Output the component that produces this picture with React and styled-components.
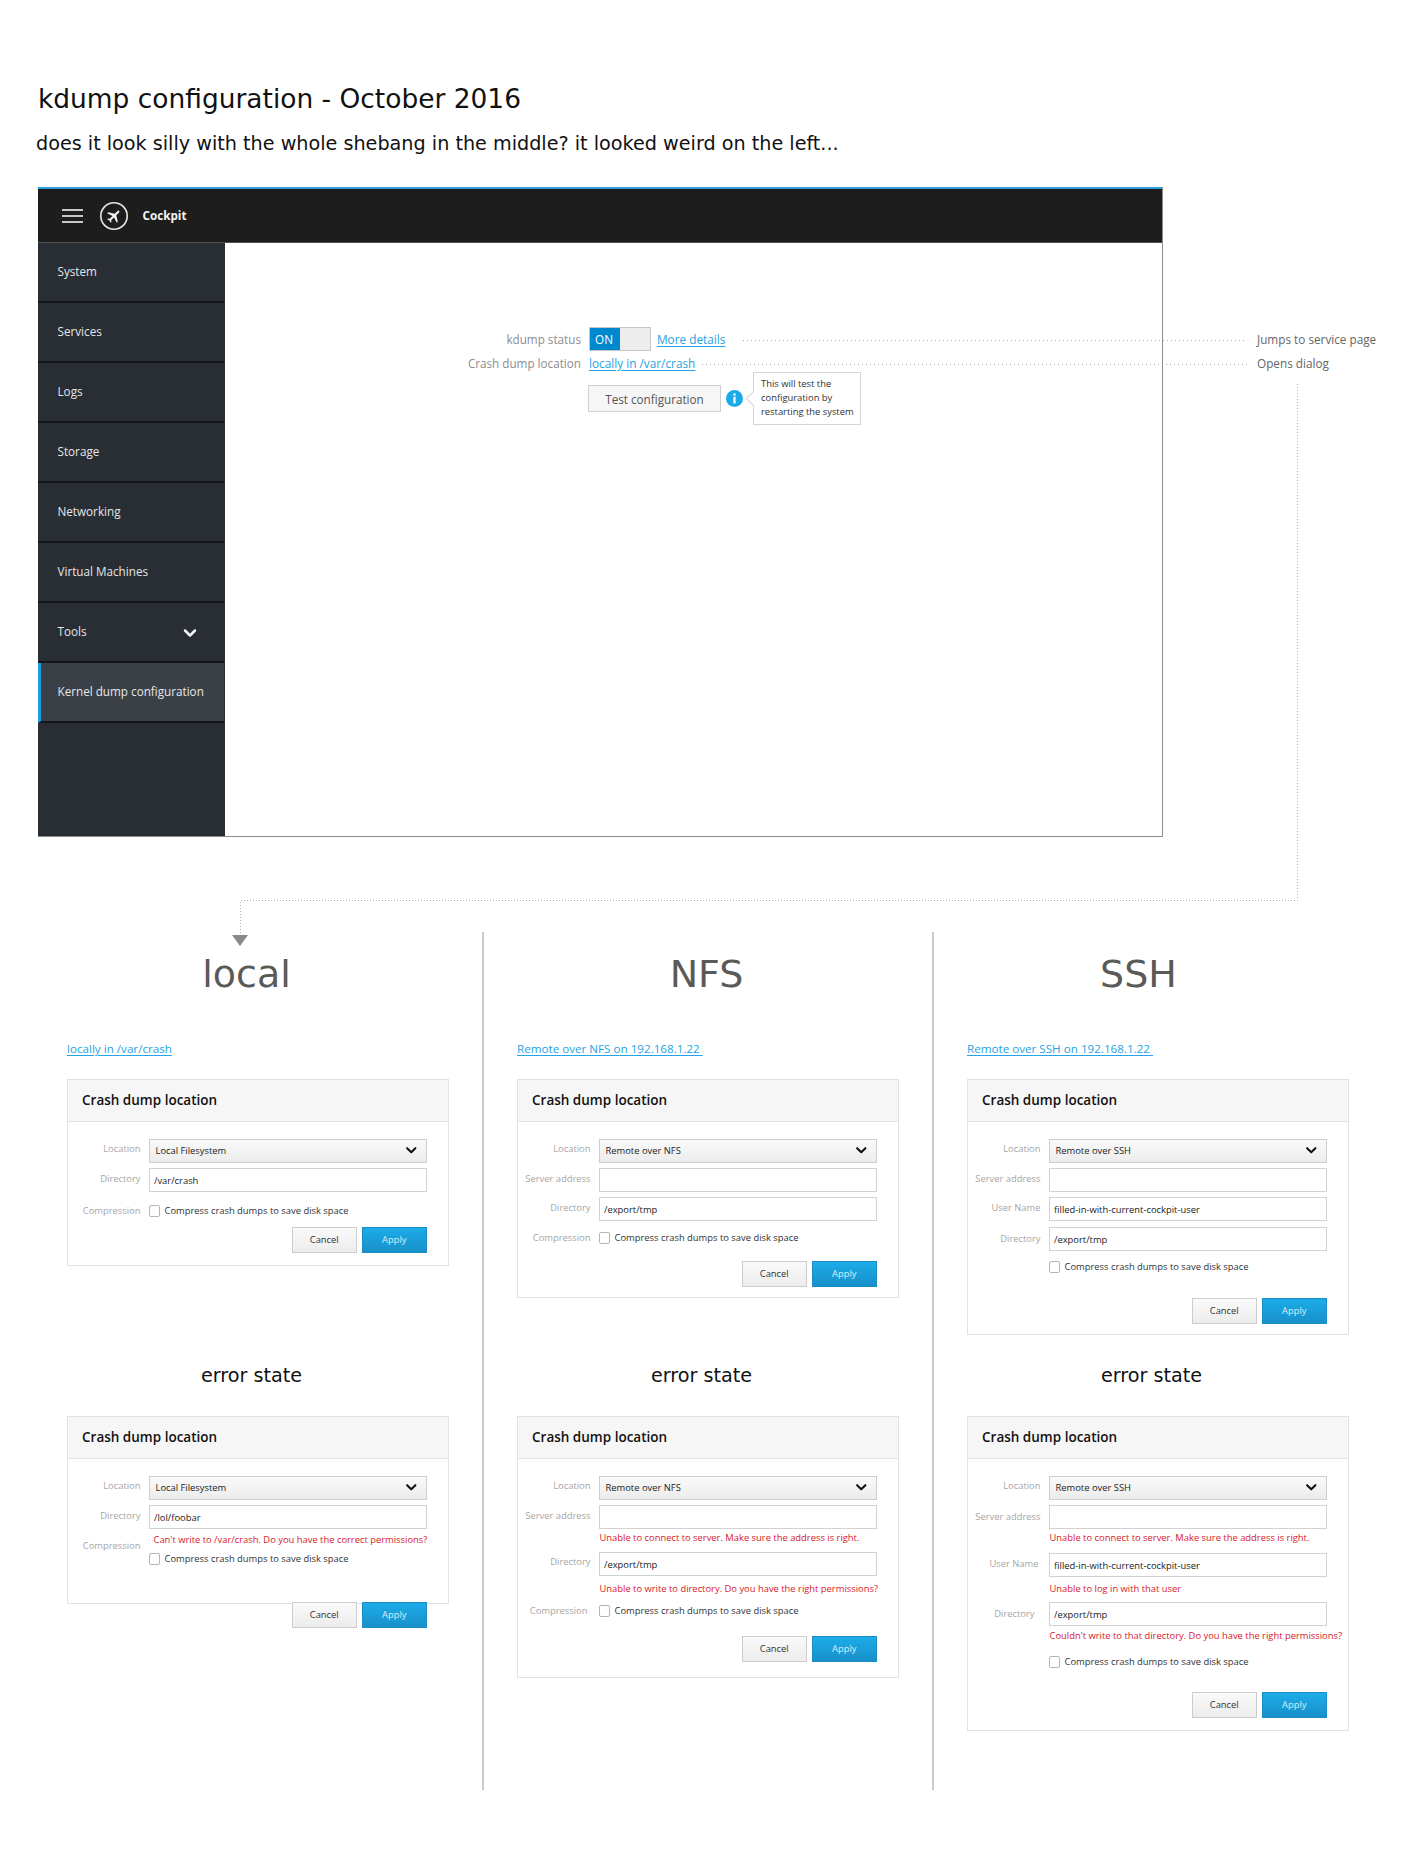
import styled, { createGlobalStyle } from "styled-components";
import { ChevronDown } from "lucide-react";

const GlobalStyle = createGlobalStyle`
  html, body {
    margin: 0;
    padding: 0;
    background: #fff;
  }
  * {
    box-sizing: border-box;
  }
`;

const Page = styled.div`
  position: relative;
  width: 1406px;
  height: 1875px;
  overflow: hidden;
  background: #fff;
  font-family: "Open Sans", sans-serif;
`;

const Title = styled.h1`
  margin: 0;
  padding: 82px 0 0 38px;
  font-family: "DejaVu Sans", sans-serif;
  font-size: 26.45px;
  line-height: 34px;
  font-weight: 400;
  color: #111;
`;

const Subtitle = styled.p`
  margin: 0;
  padding: 15.5px 0 0 36px;
  font-family: "DejaVu Sans", sans-serif;
  font-size: 19.2px;
  line-height: 24px;
  color: #111;
`;

const Window = styled.section`
  margin: 31.5px 0 0 37.5px;
  width: 1125px;
  height: 650px;
  display: flex;
  flex-direction: column;
  border-right: 1px solid #8c8c8c;
  border-bottom: 1px solid #8c8c8c;
`;

const TopBar = styled.header`
  height: 56px;
  flex: none;
  display: flex;
  align-items: center;
  padding-left: 24px;
  background: #1d1d1d;
  border-top: 2px solid #2a9fdc;
  border-bottom: 1px solid #4d4d4d;
  color: #fff;
`;

const Burger = styled.div`
  width: 21px;
  height: 14px;
  border-top: 2px solid #c8c8c8;
  border-bottom: 2px solid #c8c8c8;
  position: relative;
  &::after {
    content: "";
    position: absolute;
    left: 0;
    right: 0;
    top: 4px;
    height: 2px;
    background: #c8c8c8;
  }
`;

const Logo = styled.svg`
  margin-left: 16px;
  width: 30px;
  height: 30px;
`;

const Brand = styled.span`
  margin: -2px 0 0 14px;
  font-size: 11.7px;
  font-weight: 700;
  color: #f4f4f4;
`;

const Body = styled.div`
  flex: 1;
  display: flex;
  min-height: 0;
`;

const Sidebar = styled.nav`
  width: 187.5px;
  flex: none;
  background: #292e34;
`;

const NavItem = styled.div`
  height: 60px;
  width: 186.5px;
  display: flex;
  align-items: center;
  justify-content: space-between;
  padding: 0 24px 3px ${(p) => (p.$active ? "17px" : "20px")};
  font-size: 11.7px;
  white-space: nowrap;
  color: #e4e6e8;
  background: ${(p) => (p.$active ? "#3b4047" : "transparent")};
  border-left: ${(p) => (p.$active ? "3px solid #1a9fe0" : "none")};
  border-bottom: 2px solid #14171a;
`;

const NavChevron = styled(ChevronDown)`
  margin-top: 4px;
`;

const Main = styled.main`
  flex: 1;
  padding: 84px 0 0 199px;
  background: #fff;
`;

const StatusRow = styled.div`
  display: grid;
  grid-template-columns: 157px auto;
  column-gap: 8px;
  justify-content: start;
  align-items: center;
  height: ${(p) => p.$h}px;
  padding-top: ${(p) => p.$pt || 0}px;
`;

const StatusLabel = styled.span`
  text-align: right;
  font-size: 11.7px;
  color: #8b8d8f;
  white-space: nowrap;
`;

const StatusValue = styled.div`
  display: flex;
  align-items: center;
  gap: ${(p) => p.$gap || 7}px;
  margin-left: ${(p) => p.$left || 0}px;
`;

const Toggle = styled.div`
  width: 62px;
  height: 24px;
  display: flex;
  border: 1px solid #c6c6c6;
  background: #ededed;
`;

const ToggleOn = styled.span`
  width: 30px;
  display: flex;
  align-items: center;
  justify-content: center;
  padding-right: 2px;
  background: #0088ce;
  color: #fff;
  font-size: 11.7px;
`;

const Link = styled.a`
  font-size: ${(p) => p.$size || 11.8}px;
  color: #25a3e4;
  text-decoration: underline;
  text-underline-offset: 2px;
  white-space: nowrap;
`;

const TestButton = styled.button`
  width: 133px;
  height: 27px;
  padding: 0;
  border: 1.5px solid #cfcfcf;
  background: #f6f6f6;
  font-family: inherit;
  font-size: 11.7px;
  color: #555;
`;

const InfoIcon = styled.svg`
  width: 17px;
  height: 17px;
  margin-left: -2px;
`;

const Popover = styled.div`
  position: relative;
  width: 108px;
  height: 53px;
  margin-left: 3px;
  padding: 4px 0 0 7px;
  border: 1.5px solid #d4d4d4;
  background: #fff;
  font-size: 9.4px;
  line-height: 14px;
  color: #333;
  white-space: nowrap;
  &::before {
    content: "";
    position: absolute;
    left: -6px;
    top: 20px;
    width: 10px;
    height: 10px;
    background: #fff;
    border-left: 1.5px solid #d4d4d4;
    border-bottom: 1.5px solid #d4d4d4;
    transform: rotate(45deg);
  }
`;

const Connectors = styled.svg`
  position: absolute;
  left: 0;
  top: 0;
  width: 1406px;
  height: 1875px;
  pointer-events: none;
`;

const Note = styled.span`
  position: absolute;
  left: 1257px;
  top: ${(p) => p.$top}px;
  font-size: 11.75px;
  line-height: 18px;
  color: #666;
`;

const Columns = styled.div`
  display: flex;
  margin: 95px 0 0 33.5px;
  height: 858px;
`;

const Column = styled.section`
  width: 450px;
  flex: none;
  border-right: ${(p) => (p.$last ? "none" : "2px solid #c9c9c9")};
`;

const Upper = styled.div`
  height: 432px;
`;

const ColumnTitle = styled.h2`
  margin: 0;
  padding-top: 20px;
  width: ${(p) => p.$w}px;
  text-align: center;
  font-family: "DejaVu Sans", sans-serif;
  font-size: 38px;
  line-height: 44px;
  font-weight: 400;
  color: #5a5a58;
`;

const SummaryLink = styled.div`
  margin: 42px 0 0 33.5px;
  height: 18px;
  line-height: 18px;
`;

const Card = styled.div`
  width: 382px;
  margin: ${(p) => p.$top}px 0 0 33.5px;
  height: ${(p) => (p.$height ? `${p.$height}px` : "auto")};
  border: 1.5px solid #e2e2e2;
  padding-bottom: ${(p) => p.$pb ?? 0}px;
  background: #fff;
`;

const CardHead = styled.div`
  height: 41.5px;
  display: flex;
  align-items: center;
  padding-left: 14px;
  background: #f6f6f6;
  border-bottom: 1.5px solid #e2e2e2;
  font-size: 13.5px;
  font-weight: 600;
  color: #111;
`;

const CardRows = styled.div`
  padding-top: 17px;
`;

const Row = styled.div`
  display: grid;
  grid-template-columns: 72.5px 278px;
  column-gap: 8px;
  margin-bottom: ${(p) => p.$after ?? 5}px;
`;

const FieldLabel = styled.span`
  justify-self: end;
  margin-top: ${(p) => p.$shift || 0}px;
  margin-right: ${(p) => p.$inset || 0}px;
  font-size: 9.4px;
  line-height: ${(p) => p.$line}px;
  color: #a6a6a6;
  white-space: nowrap;
`;

const Select = styled.div`
  height: 24px;
  display: flex;
  align-items: center;
  justify-content: space-between;
  padding: 0 6px 0 6px;
  border: 1.5px solid #cdcdcd;
  background: linear-gradient(#fafafa, #ececec);
  font-size: 9.4px;
  color: #222;
`;

const Input = styled.div`
  height: 24px;
  display: flex;
  align-items: center;
  padding: 1px 0 0 4.5px;
  border: 1.5px solid #d2d2d2;
  background: #fff;
  font-size: 9.4px;
  color: #222;
`;

const ErrorText = styled.div`
  height: ${(p) => p.$h}px;
  padding-left: ${(p) => p.$indent || 1}px;
  font-size: 9.4px;
  line-height: ${(p) => p.$line}px;
  color: #d8202c;
  white-space: nowrap;
`;

const CheckLine = styled.label`
  display: flex;
  align-items: center;
  height: 12px;
  gap: 5px;
  font-size: 9.4px;
  color: #333;
  white-space: nowrap;
`;

const CheckBox = styled.span`
  width: 11px;
  height: 12px;
  flex: none;
  border: 1.5px solid #b5b5b5;
  border-radius: 2px;
  background: #fff;
`;

const Actions = styled.div`
  display: flex;
  justify-content: flex-end;
  gap: 5px;
  width: 358.5px;
  margin-top: ${(p) => p.$mt}px;
`;

const ActionButton = styled.button`
  width: ${(p) => (p.$primary ? 64.5 : 65.5)}px;
  height: 26px;
  padding: 0;
  font-family: inherit;
  font-size: 9.4px;
  color: ${(p) => (p.$primary ? "#d8eefa" : "#333")};
  border: 1.5px solid ${(p) => (p.$primary ? "#1a8dc6" : "#cccccc")};
  background: ${(p) =>
    p.$primary
      ? "linear-gradient(#1cace9, #1890c9)"
      : "linear-gradient(#fafafa, #ececec)"};
`;

const ErrorHeading = styled.h3`
  margin: 0;
  width: 436px;
  text-align: center;
  font-family: "DejaVu Sans", sans-serif;
  font-size: 19.2px;
  line-height: 24px;
  font-weight: 400;
  color: #111;
`;

const navItems = ["System", "Services", "Logs", "Storage", "Networking", "Virtual Machines"];

const columns = [
  {
    title: "local",
    titleWidth: 426,
    link: "locally in /var/crash",
    normal: {
      pb: 12.5,
      actionsTop: 10,
      rows: [
        { label: "Location", value: "Local Filesystem", select: true },
        { label: "Directory", value: "/var/crash", after: 13 },
        { label: "Compression", check: true },
      ],
    },
    failed: {
      height: 188,
      actionsTop: 37,
      rows: [
        { label: "Location", value: "Local Filesystem", select: true },
        {
          label: "Directory",
          value: "/lol/foobar",
          error: { text: "Can't write to /var/crash. Do you have the correct permissions?", h: 24, line: 22, indent: 5 },
          after: 0,
        },
        { label: "Compression", check: true, shift: -13 },
      ],
    },
  },
  {
    title: "NFS",
    titleWidth: 446,
    link: "Remote over NFS on 192.168.1.22\u00a0",
    normal: {
      pb: 10.5,
      actionsTop: 17,
      rows: [
        { label: "Location", value: "Remote over NFS", select: true },
        { label: "Server address" },
        { label: "Directory", value: "/export/tmp", after: 11 },
        { label: "Compression", check: true },
      ],
    },
    failed: {
      pb: 15.5,
      actionsTop: 19,
      rows: [
        { label: "Location", value: "Remote over NFS", select: true },
        {
          label: "Server address",
          error: { text: "Unable to connect to server. Make sure the address is right.", h: 23, line: 18 },
          after: 0,
        },
        {
          label: "Directory",
          value: "/export/tmp",
          line: 20,
          error: { text: "Unable to write to directory. Do you have the right permissions?", h: 29, line: 26 },
          after: 0,
        },
        { label: "Compression", check: true, inset: 3 },
      ],
    },
  },
  {
    title: "SSH",
    titleWidth: 410,
    link: "Remote over SSH on 192.168.1.22\u00a0",
    normal: {
      pb: 10.5,
      actionsTop: 25,
      rows: [
        { label: "Location", value: "Remote over SSH", select: true },
        { label: "Server address" },
        { label: "User Name", value: "filled-in-with-current-cockpit-user", after: 6 },
        { label: "Directory", value: "/export/tmp", after: 10, line: 24 },
        { check: true },
      ],
    },
    failed: {
      pb: 12.5,
      actionsTop: 24,
      rows: [
        { label: "Location", value: "Remote over SSH", select: true },
        {
          label: "Server address",
          line: 24,
          error: { text: "Unable to connect to server. Make sure the address is right.", h: 24, line: 18 },
          after: 0,
        },
        {
          label: "User Name",
          value: "filled-in-with-current-cockpit-user",
          error: { text: "Unable to log in with that user", h: 25, line: 24 },
          after: 0,
          inset: 2,
        },
        {
          label: "Directory",
          value: "/export/tmp",
          line: 24,
          error: { text: "Couldn't write to that directory. Do you have the right permissions?", h: 30, line: 20 },
          after: 0,
          inset: 6,
        },
        { check: true },
      ],
    },
  },
];

function labelLine(row) {
  if (row.check) return 12;
  if (row.select) return 20;
  return row.line || 22;
}

function FormRow({ row }) {
  return (
    <Row $after={row.check ? 0 : row.after}>
      <FieldLabel $shift={row.shift} $inset={row.inset} $line={labelLine(row)}>
        {row.label}
      </FieldLabel>
      {row.check ? (
        <CheckLine>
          <CheckBox />
          Compress crash dumps to save disk space
        </CheckLine>
      ) : (
        <div>
          {row.select ? (
            <Select>
              {row.value}
              <ChevronDown size={16.5} strokeWidth={3} color="#111" />
            </Select>
          ) : (
            <Input>{row.value}</Input>
          )}
          {row.error && (
            <ErrorText $h={row.error.h} $line={row.error.line} $indent={row.error.indent}>
              {row.error.text}
            </ErrorText>
          )}
        </div>
      )}
    </Row>
  );
}

function LocationCard({ data, top }) {
  return (
    <Card $height={data.height} $pb={data.pb} $top={top}>
      <CardHead>Crash dump location</CardHead>
      <CardRows>
        {data.rows.map((row, i) => (
          <FormRow key={i} row={row} />
        ))}
        <Actions $mt={data.actionsTop}>
          <ActionButton>Cancel</ActionButton>
          <ActionButton $primary>Apply</ActionButton>
        </Actions>
      </CardRows>
    </Card>
  );
}

export default function App() {
  return (
    <Page>
      <GlobalStyle />
      <Title>kdump configuration - October 2016</Title>
      <Subtitle>does it look silly with the whole shebang in the middle? it looked weird on the left...</Subtitle>

      <Window>
        <TopBar>
          <Burger />
          <Logo viewBox="0 0 30 30">
            <circle cx="15" cy="15" r="13.2" fill="none" stroke="#e8e8e8" strokeWidth="1.6" />
            <path
              transform="translate(15 15) rotate(45) scale(0.72) translate(-11.5 -12)"
              fill="#f0f0f0"
              d="M21 16v-2l-8-5V3.5c0-.83-.67-1.5-1.5-1.5S10 2.67 10 3.5V9l-8 5v2l8-2.5V19l-2 1.5V22l3.5-1 3.5 1v-1.5L13 19v-5.5l8 2.5z"
            />
          </Logo>
          <Brand>Cockpit</Brand>
        </TopBar>
        <Body>
          <Sidebar>
            {navItems.map((item) => (
              <NavItem key={item}>{item}</NavItem>
            ))}
            <NavItem>
              Tools
              <NavChevron size={20} strokeWidth={3} color="#f4f4f4" />
            </NavItem>
            <NavItem $active>Kernel dump configuration</NavItem>
          </Sidebar>
          <Main>
            <StatusRow $h={24}>
              <StatusLabel>kdump status</StatusLabel>
              <StatusValue $gap={6}>
                <Toggle>
                  <ToggleOn>ON</ToggleOn>
                </Toggle>
                <Link>More details</Link>
              </StatusValue>
            </StatusRow>
            <StatusRow $h={21} $pt={3}>
              <StatusLabel>Crash dump location</StatusLabel>
              <StatusValue>
                <Link>locally in /var/crash</Link>
              </StatusValue>
            </StatusRow>
            <StatusRow $h={53}>
              <span />
              <StatusValue $left={-1}>
                <TestButton>Test configuration</TestButton>
                <InfoIcon viewBox="0 0 17 17">
                  <circle cx="8.5" cy="8.5" r="8.5" fill="#1ba9e8" />
                  <rect x="7.4" y="3.4" width="2.2" height="2.2" fill="#fff" />
                  <rect x="7.4" y="6.8" width="2.2" height="6.6" fill="#fff" />
                </InfoIcon>
                <Popover>
                  This will test the
                  <br />
                  configuration by
                  <br />
                  restarting the system
                </Popover>
              </StatusValue>
            </StatusRow>
          </Main>
        </Body>
      </Window>

      <Columns>
        {columns.map((col, i) => (
          <Column key={col.title} $last={i === 2}>
            <Upper>
              <ColumnTitle $w={col.titleWidth}>{col.title}</ColumnTitle>
              <SummaryLink>
                <Link $size={11.65}>{col.link}</Link>
              </SummaryLink>
              <LocationCard data={col.normal} top={23} />
            </Upper>
            <ErrorHeading>error state</ErrorHeading>
            <LocationCard data={col.failed} top={28} />
          </Column>
        ))}
      </Columns>

      <Connectors viewBox="0 0 1406 1875">
        <g fill="none" stroke="#a5a5a5" strokeWidth="1" strokeDasharray="1 3">
          <path d="M743 340.5H1247" />
          <path d="M702 364.5H1247" />
        </g>
        <path
          d="M1297.5 384V900.5H240.5V935"
          fill="none"
          stroke="#b0b0b0"
          strokeWidth="1"
          strokeDasharray="1 2"
        />
        <path d="M232 935H248L240 946Z" fill="#8a8a86" />
      </Connectors>
      <Note $top={330}>Jumps to service page</Note>
      <Note $top={354}>Opens dialog</Note>
    </Page>
  );
}
